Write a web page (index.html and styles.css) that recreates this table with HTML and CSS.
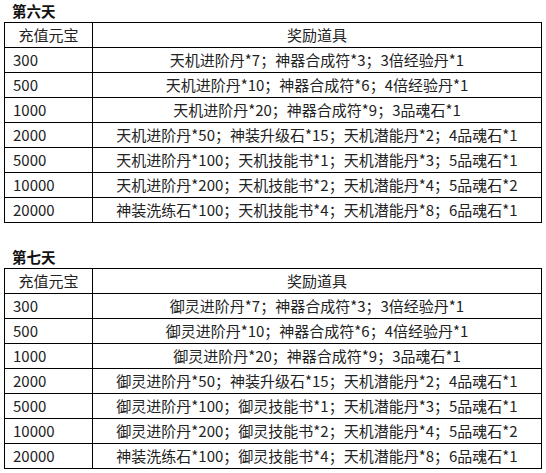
FILE: index.html
```html
<!DOCTYPE html>
<html lang="zh">
<head>
<meta charset="utf-8">
<link rel="stylesheet" href="styles.css">
</head>
<body>
<div class="page">
  <section class="day">
    <h3 class="day-title">第六天</h3>
    <table class="reward">
      <tr><th class="col-amt">充值元宝</th><th>奖励道具</th></tr>
      <tr><td class="amt">300</td><td>天机进阶丹*7；神器合成符*3；3倍经验丹*1</td></tr>
      <tr><td class="amt">500</td><td>天机进阶丹*10；神器合成符*6；4倍经验丹*1</td></tr>
      <tr><td class="amt">1000</td><td>天机进阶丹*20；神器合成符*9；3品魂石*1</td></tr>
      <tr><td class="amt">2000</td><td>天机进阶丹*50；神装升级石*15；天机潜能丹*2；4品魂石*1</td></tr>
      <tr><td class="amt">5000</td><td>天机进阶丹*100；天机技能书*1；天机潜能丹*3；5品魂石*1</td></tr>
      <tr><td class="amt">10000</td><td>天机进阶丹*200；天机技能书*2；天机潜能丹*4；5品魂石*2</td></tr>
      <tr><td class="amt">20000</td><td>神装洗练石*100；天机技能书*4；天机潜能丹*8；6品魂石*1</td></tr>
    </table>
  </section>
  <section class="day">
    <h3 class="day-title">第七天</h3>
    <table class="reward">
      <tr><th class="col-amt">充值元宝</th><th>奖励道具</th></tr>
      <tr><td class="amt">300</td><td>御灵进阶丹*7；神器合成符*3；3倍经验丹*1</td></tr>
      <tr><td class="amt">500</td><td>御灵进阶丹*10；神器合成符*6；4倍经验丹*1</td></tr>
      <tr><td class="amt">1000</td><td>御灵进阶丹*20；神器合成符*9；3品魂石*1</td></tr>
      <tr><td class="amt">2000</td><td>御灵进阶丹*50；神装升级石*15；天机潜能丹*2；4品魂石*1</td></tr>
      <tr><td class="amt">5000</td><td>御灵进阶丹*100；御灵技能书*1；天机潜能丹*3；5品魂石*1</td></tr>
      <tr><td class="amt">10000</td><td>御灵进阶丹*200；御灵技能书*2；天机潜能丹*4；5品魂石*2</td></tr>
      <tr><td class="amt">20000</td><td>神装洗练石*100；御灵技能书*4；天机潜能丹*8；6品魂石*1</td></tr>
    </table>
  </section>
</div>
</body>
</html>
```
FILE: styles.css
```css
html, body {
  margin: 0;
  padding: 0;
  background: #fff;
}
.page {
  padding: 0 4px 0 4px;
  display: flex;
  flex-direction: column;
  gap: 23px;
  font-family: "Noto Sans CJK SC", "Noto Sans", sans-serif;
  color: #222;
}
.day-title {
  margin: 0;
  padding-left: 8px;
  height: 22px;
  line-height: 22px;
  font-size: 14.5px;
  font-weight: bold;
  color: #111;
}
.reward {
  width: 538px;
  border-collapse: collapse;
  font-size: 15px;
  table-layout: fixed;
}
.reward th, .reward td {
  border: 1px solid #000;
  height: 24px;
  padding: 0 8px;
  line-height: 24px;
  font-weight: normal;
  text-align: center;
  white-space: nowrap;
  box-sizing: border-box;
}
.reward tr { height: 25px; }
.col-amt { width: 88px; }
.reward td.amt { text-align: left; }
```
